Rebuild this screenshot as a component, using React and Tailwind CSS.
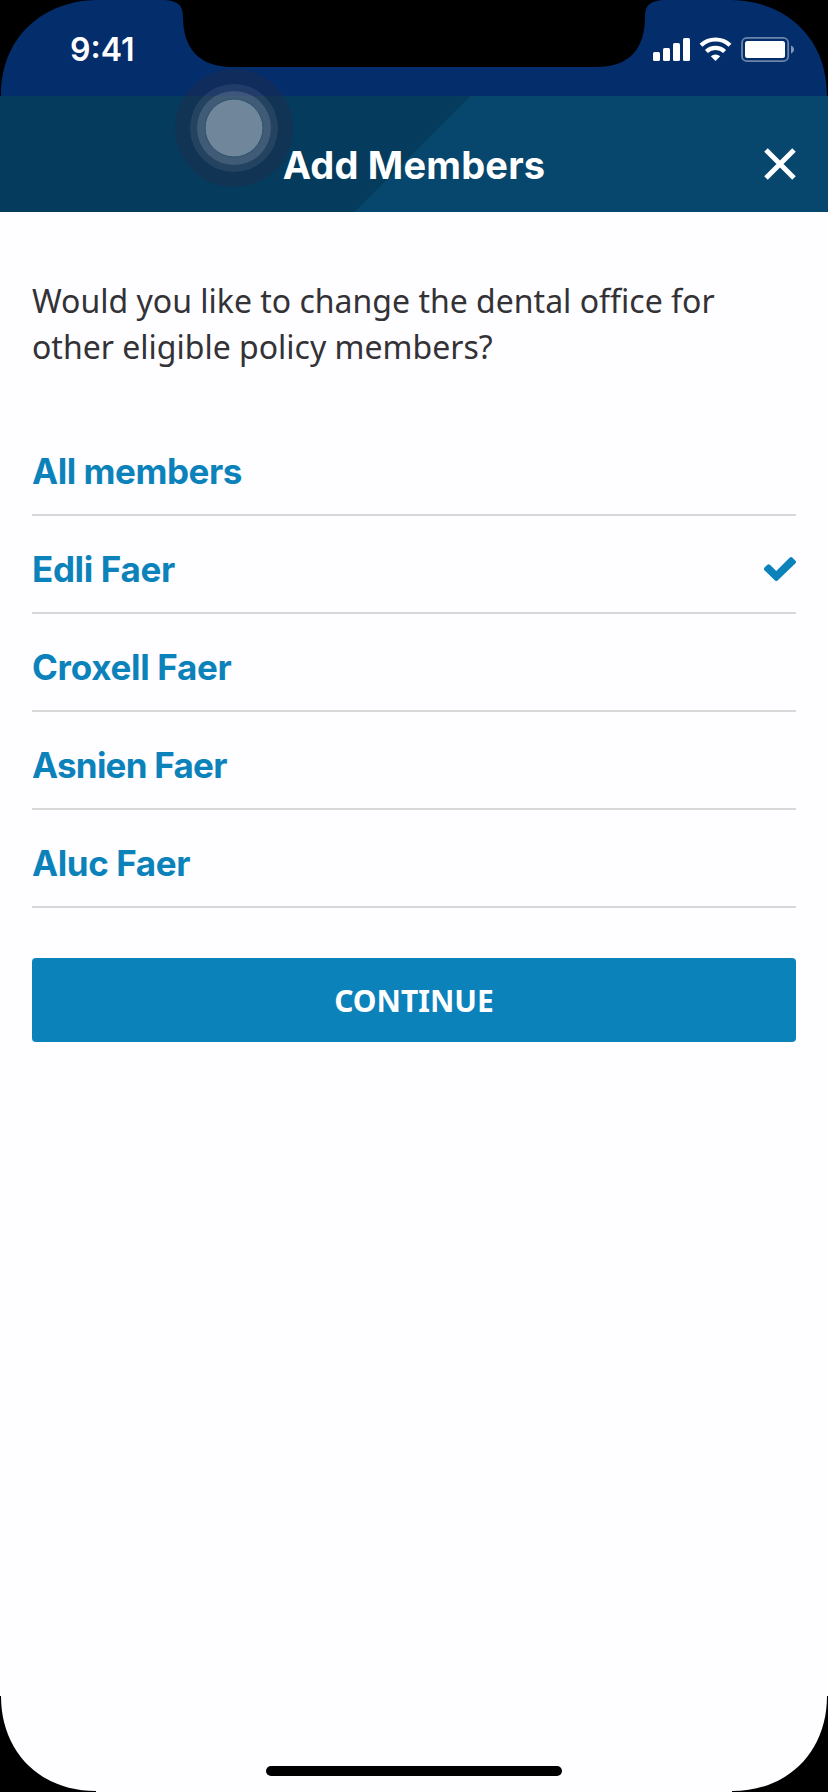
const members = [
  { name: 'All members', tracking: 'tracking-[-0.45px]' },
  { name: 'Edli Faer', tracking: 'tracking-[-0.35px]', selected: true },
  { name: 'Croxell Faer', tracking: 'tracking-[-0.3px]' },
  { name: 'Asnien Faer', tracking: 'tracking-[-0.75px]' },
  { name: 'Aluc Faer', tracking: 'tracking-[-0.4px]' },
];

function StatusIcons() {
  return (
    <svg width="146" height="30" viewBox="650 34 146 30" className="block" aria-hidden="true">
      <g fill="#fff">
        <rect x="653" y="52" width="7" height="9" rx="1.6" />
        <rect x="663" y="48" width="7" height="13" rx="1.6" />
        <rect x="673" y="43" width="7" height="18" rx="1.6" />
        <rect x="683" y="38" width="7" height="23" rx="1.6" />
        <path d="M715.5 61 L710.8 56.3 A7.2 7.2 0 0 1 720.2 56.3 Z" />
      </g>
      <g fill="none" stroke="#fff" strokeWidth="4.2">
        <path d="M701 45.3 A21 21 0 0 1 730 45.3" />
        <path d="M706.4 51.6 A13.2 13.2 0 0 1 724.6 51.6" />
      </g>
      <rect x="742" y="37.8" width="46.2" height="23.4" rx="5" fill="none" stroke="#fff" strokeOpacity="0.42" strokeWidth="1.8" />
      <rect x="745" y="41" width="40" height="17" rx="2.5" fill="#fff" />
      <path d="M791 45.5 C795 47 795 52 791 53.5 Z" fill="#fff" fillOpacity="0.5" />
    </svg>
  );
}

function DeviceFrame() {
  return (
    <svg width="828" height="1792" viewBox="0 0 828 1792" className="pointer-events-none absolute inset-0" aria-hidden="true">
      <path d="M0 0 H96 C46 1 1 34 1 96 H0 Z" />
      <path d="M828 0 H732 C782 1 827 34 827 96 H828 Z" />
      <path d="M0 1696 H1 C1 1752 40 1791 96 1791 V1792 H0 Z" />
      <path d="M828 1696 H827 C827 1752 788 1791 732 1791 V1792 H828 Z" />
      <path d="M165 0 C178 1 183 5 183 17 C183 48 199 67 232 67 H597 C630 67 645 48 645 17 C645 5 650 1 663 0 Z" />
    </svg>
  );
}

function TouchIndicator() {
  return (
    <svg width="120" height="120" viewBox="-60 -60 120 120" className="pointer-events-none absolute top-[68px] left-[174px]" aria-hidden="true">
      <circle r="59" fill="#292a42" fillOpacity="0.34" />
      <circle r="44" fill="#fff" fillOpacity="0.08" />
      <circle r="37" fill="#fff" fillOpacity="0.13" />
      <circle r="29" fill="#70869a" stroke="#2b526e" strokeWidth="1" />
    </svg>
  );
}

export default function App() {
  return (
    <div className="relative flex h-[1792px] w-[828px] flex-col overflow-hidden bg-[#fefdff]">
      <div className="flex h-24 items-start justify-between bg-[#042e6b] pr-8 pl-[70px] text-white">
        <span className="pt-[30px] font-['Inter',sans-serif] text-[32px] leading-[40px] font-semibold">9:41</span>
        <div className="pt-[34px]"><StatusIcons /></div>
      </div>
      <header className="grid h-[116px] grid-cols-[1fr_auto_1fr] items-center bg-[linear-gradient(135deg,#053b5d_0_333px,#07466d_333px)] px-8 pt-5 text-white">
        <span />
        <h1 className="pt-px font-['Inter',sans-serif] text-[38px] leading-[48px] font-bold tracking-[0.2px]">Add Members</h1>
        <button aria-label="Close" className="justify-self-end">
          <svg width="32" height="32" viewBox="0 0 32 32" className="block" stroke="currentColor" strokeWidth="5">
            <path d="M2 2 30 30M30 2 2 30" />
          </svg>
        </button>
      </header>
      <main className="flex flex-col px-8 pt-[66px]">
        <p className="font-['Noto_Sans',sans-serif] text-[32px] leading-[46px] whitespace-nowrap text-[#333236]">
          Would you like to change the dental office for<br />other eligible policy members?
        </p>
        <ul className="mt-12">
          {members.map(({ name, tracking, selected }) => (
            <li key={name} className="flex h-[98px] items-center justify-between border-b-2 border-[#d8d8d6] font-['Inter',sans-serif] text-[35px] leading-[48px] font-bold text-[#0c82bb]">
              <span className={`pt-2.5 ${tracking}`}>{name}</span>
              {selected && (
                <svg width="32" height="24" viewBox="0 0 32 24" className="mt-[9px] block" fill="currentColor" aria-label="Selected">
                  <path d="M.5 10.6 3.4 7.8Q4.8 6.7 6.2 8L12.3 14 25.6.8Q27.1-.6 28.5.8L31.5 3.7Q32.7 5 31.5 6.3L13.6 23.6Q12.3 24.6 11 23.6L.5 13.3Q-.6 12 .5 10.6Z" />
                </svg>
              )}
            </li>
          ))}
        </ul>
        <button className="mt-[50px] h-[84px] rounded bg-[#0c82bb] font-['Noto_Sans',sans-serif] text-[30px] font-bold text-white">
          CONTINUE
        </button>
      </main>
      <DeviceFrame />
      <TouchIndicator />
      <div className="absolute bottom-4 left-[266px] h-2.5 w-[296px] rounded-full bg-black" />
    </div>
  );
}
